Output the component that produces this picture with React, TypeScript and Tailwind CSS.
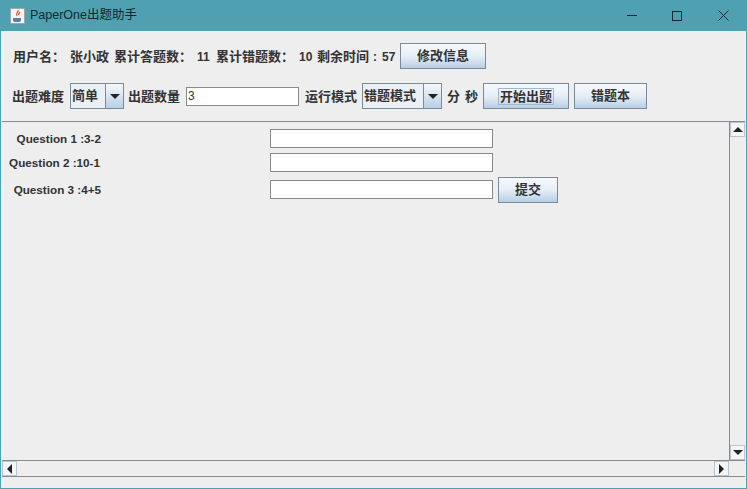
const font = { fontFamily: '"Liberation Sans", "Noto Sans CJK SC", sans-serif' };

function Btn({ label, className = "", focus = false }: { label: string; className?: string; focus?: boolean }) {
  return (
    <button
      type="button"
      className={`flex items-center justify-center border border-[#7a8a99] bg-gradient-to-b from-[#f6f9fc] via-[#e6eef6] to-[#b8cfe5] text-[13px] font-bold text-[#333333] ${className}`}
    >
      <span className={focus ? "border border-[#a3b8cc] px-px leading-[15px]" : ""}>{label}</span>
    </button>
  );
}

function Combo({ label, className = "" }: { label: string; className?: string }) {
  return (
    <div className={`flex h-[26px] border border-[#7a8a99] bg-[#eaf0f6] ${className}`}>
      <span className="flex-1 pl-px text-[13px] font-bold leading-[24px] text-[#333333]">{label}</span>
      <span className="flex w-[18px] items-center justify-center border-l border-[#7a8a99] bg-gradient-to-b from-[#f6f9fc] to-[#b8cfe5]">
        <span className="h-0 w-0 border-x-[5px] border-t-[5px] border-x-transparent border-t-[#222222]" />
      </span>
    </div>
  );
}

function Label({ text, className = "" }: { text: string; className?: string }) {
  return <span className={`whitespace-nowrap text-[13px] font-bold text-[#333333] ${className}`}>{text}</span>;
}

function Num({ text, className = "" }: { text: string; className?: string }) {
  return <span className={`w-[14px] whitespace-nowrap text-[12px] font-bold text-[#333333] ${className}`}>{text}</span>;
}

function ScrollBtn({ dir }: { dir: "up" | "down" | "left" | "right" }) {
  const arrow = {
    up: "border-x-[5px] border-b-[5px] border-x-transparent border-b-[#222222]",
    down: "border-x-[5px] border-t-[5px] border-x-transparent border-t-[#222222]",
    left: "border-y-[5px] border-r-[5px] border-y-transparent border-r-[#222222]",
    right: "border-y-[5px] border-l-[5px] border-y-transparent border-l-[#222222]",
  }[dir];
  return (
    <span className="flex h-[15px] w-[15px] shrink-0 items-center justify-center border border-[#b8c4d0] bg-[#f3f5f7]">
      <span className={`h-0 w-0 ${arrow}`} />
    </span>
  );
}

const questions = [
  { text: "Question 1 :3-2", rowClass: "h-[19px] mb-[5px]", pr: "pr-0" },
  { text: "Question 2 :10-1", rowClass: "h-[19px] mb-[8px]", pr: "pr-[1px]" },
  { text: "Question 3 :4+5", rowClass: "h-[19px]", pr: "pr-0" },
];

export default function App() {
  return (
    <div className="flex h-[489px] w-[747px] flex-col overflow-hidden bg-[#4fa1b1]" style={font}>
      {/* title bar */}
      <div className="flex h-[31px] shrink-0 items-center pl-[10px]">
        <svg width="15" height="16" viewBox="0 0 15 16" className="shrink-0">
          <rect x="0.5" y="0.5" width="14" height="15" fill="#f4f4f4" stroke="#9aa7b0" />
          <path d="M8 2c1 2-3 3-1 6M10 4c-1 1-2 2-1 3" stroke="#d9541e" strokeWidth="1.2" fill="none" />
          <path d="M3 10h8v2a2 2 0 0 1-2 2H5a2 2 0 0 1-2-2z" fill="#5a7fa8" />
        </svg>
        <span className="ml-[5px] text-[12.5px] text-[#10282e]">PaperOne出题助手</span>
        <div className="ml-auto flex items-center pr-[18px]">
          <span className="mr-[35px] h-px w-[10px] bg-[#10282e]" />
          <span className="mr-[36px] h-[10px] w-[10px] border border-[#10282e]" />
          <svg width="11" height="11" viewBox="0 0 11 11">
            <path d="M0.5 0.5l10 10M10.5 0.5l-10 10" stroke="#10282e" fill="none" />
          </svg>
        </div>
      </div>

      {/* client area */}
      <div className="mx-[1px] mb-[1px] flex min-h-0 flex-1 flex-col bg-[#eeeeee] pl-px pr-px">
        <div className="flex h-[90px] shrink-0 flex-col pl-[10px]">
          <div className="mt-[11px] flex h-[28px] items-center gap-[5px] pl-px">
            <Label text="用户名：" className="pt-[2px]" />
            <Label text="张小政" className="pt-[2px]" />
            <Label text="累计答题数：" className="pt-[2px]" />
            <Num text="11" className="pt-[2px]" />
            <Label text="累计错题数：" className="pt-[2px]" />
            <Num text="10" className="-mr-px pt-[2px]" />
            <span className="flex w-[78px] items-center whitespace-nowrap pt-[2px] font-bold text-[#333333]">
              <span className="text-[13px]">剩余时间</span>
              <span className="ml-[4px] text-[12px]">:</span>
              <span className="ml-[5px] text-[12px]">57</span>
            </span>
            <Btn label="修改信息" className="h-[26px] w-[86px]" />
          </div>
          <div className="mt-[13px] flex h-[26px] items-center">
            <Label text="出题难度" className="mr-[6px] pt-px" />
            <Combo label="简单" className="mr-[4px] w-[54px]" />
            <Label text="出题数量" className="mr-[6px] pt-px" />
            <input
              readOnly
              value="3"
              className="mr-[6px] h-[19px] w-[113px] border border-[#8a8a8a] bg-white pl-px text-[12px] text-[#333333] outline-none"
            />
            <Label text="运行模式" className="mr-[5px] pt-px" />
            <Combo label="错题模式" className="mr-[5px] w-[80px]" />
            <Label text="分" className="mr-[5px] pt-px" />
            <Label text="秒" className="mr-[5px] pt-px" />
            <Btn label="开始出题" focus className="mr-[5px] h-[26px] w-[86px]" />
            <Btn label="错题本" className="h-[26px] w-[73px]" />
          </div>
        </div>

        {/* scroll pane */}
        <div className="flex h-[356px] shrink-0 flex-col border-y border-[#8a8a8a]">
          <div className="flex min-h-0 flex-1">
            <div className="flex flex-1 flex-col items-start pt-[7px]">
              {questions.map((q, i) => (
                <div key={q.text} className={`flex items-center ${q.rowClass}`}>
                  <span className={`flex w-[99px] justify-end ${q.pr}`}>
                    <span className="whitespace-nowrap text-[11.7px] font-bold text-[#333333]">{q.text}</span>
                  </span>
                  <input
                    readOnly
                    className="ml-[169px] h-full w-[223px] border border-[#8a8a8a] bg-white outline-none"
                  />
                  {i === 2 && <Btn label="提交" className="ml-[5px] h-[26px] w-[60px]" />}
                </div>
              ))}
            </div>
            <div className="flex w-[16px] flex-col justify-between border-l border-[#8a8a8a] bg-[#eeeeee]">
              <ScrollBtn dir="up" />
              <ScrollBtn dir="down" />
            </div>
          </div>
          <div className="flex h-[16px] shrink-0 items-center border-t border-[#8a8a8a]">
            <ScrollBtn dir="left" />
            <span className="flex-1" />
            <ScrollBtn dir="right" />
            <span className="w-[16px]" />
          </div>
        </div>
        <div className="flex-1" />
      </div>
    </div>
  );
}
